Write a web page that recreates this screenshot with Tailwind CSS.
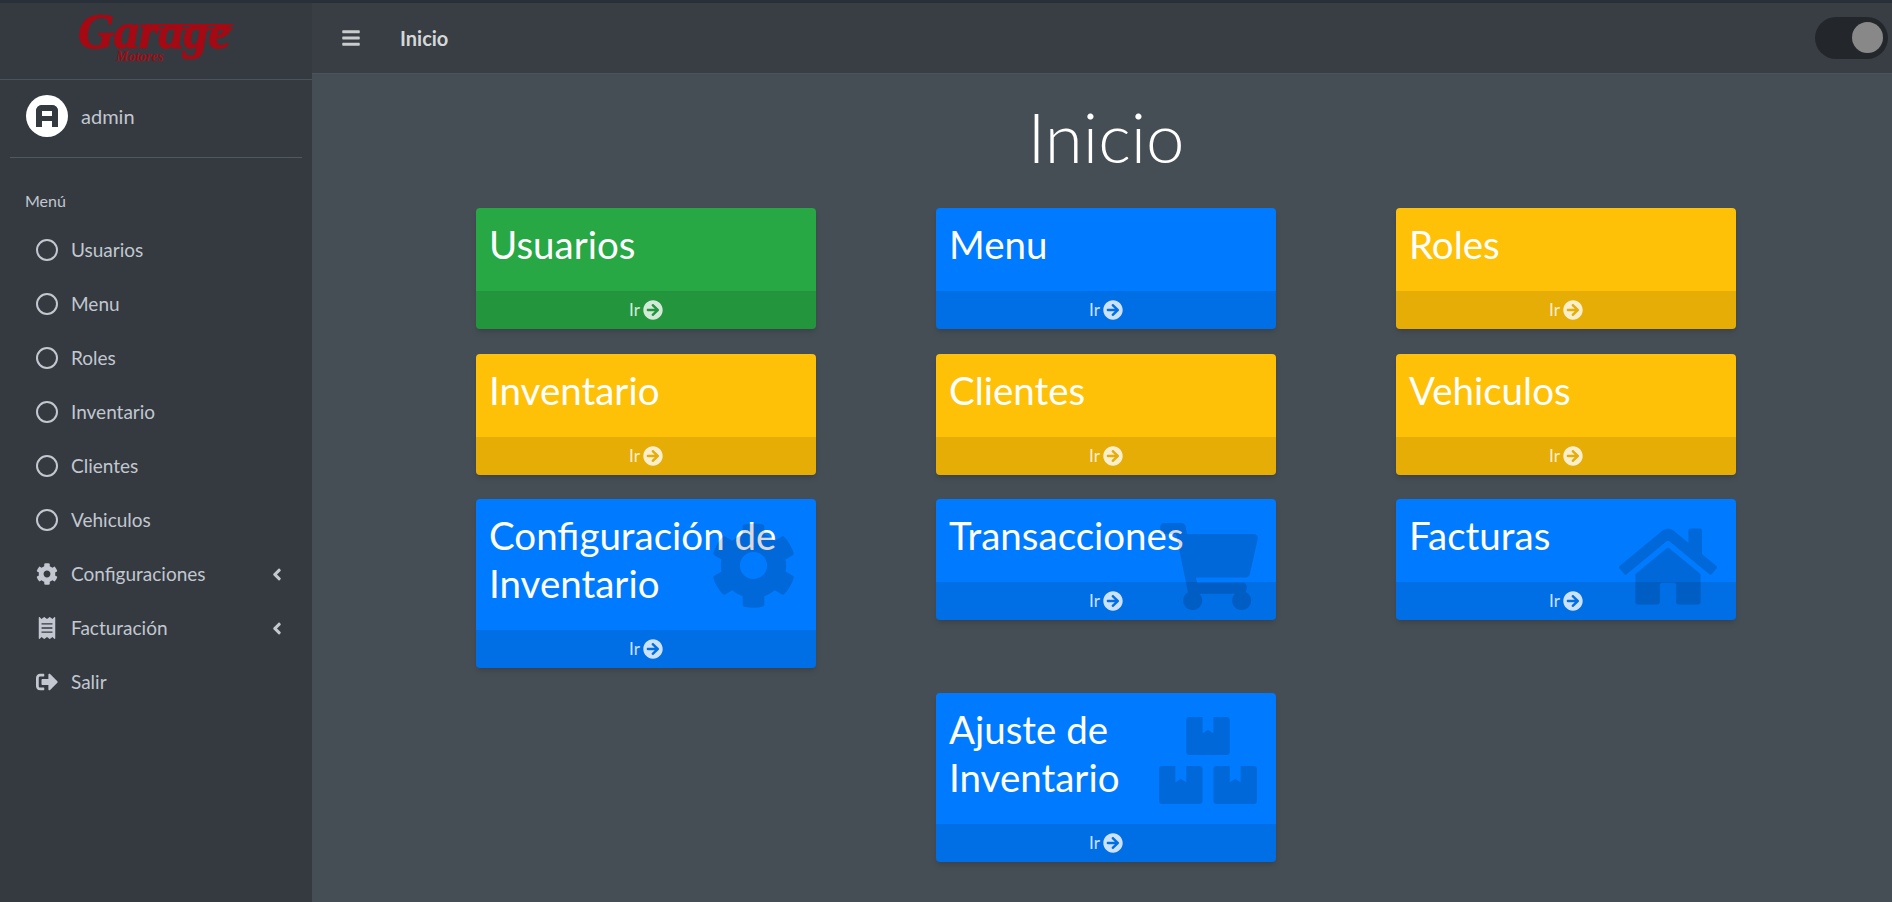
<!DOCTYPE html>
<html lang="es">
<head>
    <meta charset="UTF-8">
    <meta name="viewport" content="width=device-width, initial-scale=1.0">
    <title>Inicio</title>
    <script src="https://cdn.jsdelivr.net/npm/@tailwindcss/browser@4"></script>
</head>
<body class="h-screen overflow-hidden bg-[#343a40] font-[Lato,sans-serif] text-white">
    <div class="h-[3px] bg-[#2a303a]"></div>
    <div class="flex h-[899px]">
        <!-- Sidebar -->
        <aside class="w-[312px] shrink-0 bg-[#343a40] text-[#c2c7d0]">
            <div class="relative h-[77px] border-b border-[#4b545c]">
                <div class="absolute left-[78px] top-[10px] font-['Liberation_Serif',serif] text-[50px] font-bold italic leading-[36px] text-[#a50a14] [-webkit-text-stroke:1px_#a50a14]">Garage</div>
                <div class="absolute left-[146px] top-[21px] h-[2px] w-[87px] bg-[#a50a14]"></div>
                <div class="absolute left-[146px] top-[25px] h-[2px] w-[87px] bg-[#a50a14]"></div>
                <div class="absolute left-[116px] top-[47px] font-['Liberation_Serif',serif] text-[14px] font-bold italic leading-[14px] text-[#a50a14]">Motores</div>
            </div>
            <!-- Usuario -->
            <div class="mx-[10px] flex h-[78px] items-center border-b border-[#4f5962] pb-[6px] pl-[16px]">
                <div class="flex h-[42px] w-[42px] items-center justify-center rounded-full bg-white">
                    <div class="relative h-[22px] w-[22px] rounded-t-[6px] border-x-[6px] border-t-[6px] border-[#343a40]">
                        <div class="absolute left-0 right-0 top-[5px] h-[5px] bg-[#343a40]"></div>
                    </div>
                </div>
                <span class="ml-[13px] text-[20px] leading-none">admin</span>
            </div>
            <div class="pl-[25px] pt-[33px] text-[16px] leading-[20px]">Menú</div>
            <nav class="mt-[12px] text-[19px]">
                <a class="flex h-[54px] items-center pl-[36px]"><span class="h-[22px] w-[22px] rounded-full border-[2.5px] border-[#c2c7d0]"></span><span class="ml-[13px]">Usuarios</span></a>
                <a class="flex h-[54px] items-center pl-[36px]"><span class="h-[22px] w-[22px] rounded-full border-[2.5px] border-[#c2c7d0]"></span><span class="ml-[13px]">Menu</span></a>
                <a class="flex h-[54px] items-center pl-[36px]"><span class="h-[22px] w-[22px] rounded-full border-[2.5px] border-[#c2c7d0]"></span><span class="ml-[13px]">Roles</span></a>
                <a class="flex h-[54px] items-center pl-[36px]"><span class="h-[22px] w-[22px] rounded-full border-[2.5px] border-[#c2c7d0]"></span><span class="ml-[13px]">Inventario</span></a>
                <a class="flex h-[54px] items-center pl-[36px]"><span class="h-[22px] w-[22px] rounded-full border-[2.5px] border-[#c2c7d0]"></span><span class="ml-[13px]">Clientes</span></a>
                <a class="flex h-[54px] items-center pl-[36px]"><span class="h-[22px] w-[22px] rounded-full border-[2.5px] border-[#c2c7d0]"></span><span class="ml-[13px]">Vehiculos</span></a>
                <a class="flex h-[54px] items-center pl-[36px]">
                    <svg class="h-[22px] w-[22px] fill-current" viewBox="0 0 512 512"><path d="M487.4 315.7l-42.6-24.6c4.3-23.2 4.3-47 0-70.2l42.6-24.6c4.9-2.8 7.1-8.6 5.5-14-11.1-35.6-30-67.8-54.7-94.6-3.8-4.1-10-5.1-14.8-2.3L380.8 110c-17.9-15.4-38.5-27.3-60.8-35.1V25.8c0-5.6-3.9-10.5-9.4-11.7-36.7-8.2-74.3-7.8-109.2 0-5.5 1.2-9.4 6.1-9.4 11.7V75c-22.2 7.9-42.8 19.8-60.8 35.1L88.7 85.5c-4.9-2.8-11-1.9-14.8 2.3-24.7 26.7-43.6 58.9-54.7 94.6-1.7 5.4.6 11.2 5.5 14L67.3 221c-4.3 23.2-4.3 47 0 70.2l-42.6 24.6c-4.9 2.8-7.1 8.6-5.5 14 11.1 35.6 30 67.8 54.7 94.6 3.8 4.1 10 5.1 14.8 2.3l42.6-24.6c17.9 15.4 38.5 27.3 60.8 35.1v49.2c0 5.6 3.9 10.5 9.4 11.7 36.7 8.2 74.3 7.8 109.2 0 5.5-1.2 9.4-6.1 9.4-11.7v-49.2c22.2-7.9 42.8-19.8 60.8-35.1l42.6 24.6c4.9 2.8 11 1.9 14.8-2.3 24.7-26.7 43.6-58.9 54.7-94.6 1.5-5.5-.7-11.3-5.6-14.1zM256 336c-44.1 0-80-35.9-80-80s35.9-80 80-80 80 35.9 80 80-35.9 80-80 80z"/></svg>
                    <span class="ml-[13px]">Configuraciones</span>
                    <svg class="ml-auto mr-[30px] h-[19px] w-[10px] fill-current" viewBox="0 0 256 512"><path d="M31.7 239l136-136c9.4-9.4 24.6-9.4 33.9 0l22.6 22.6c9.4 9.4 9.4 24.6 0 33.9L127.9 256l96.4 96.4c9.4 9.4 9.4 24.6 0 33.9L201.7 409c-9.4 9.4-24.6 9.4-33.9 0l-136-136c-9.5-9.4-9.5-24.6-.1-34z"/></svg>
                </a>
                <a class="flex h-[54px] items-center pl-[36px]">
                    <svg class="h-[22px] w-[22px] fill-current" viewBox="0 0 384 512"><path d="M358.4 3.2L320 48 265.6 3.2a15.9 15.9 0 0 0-19.2 0L192 48 137.6 3.2a15.9 15.9 0 0 0-19.2 0L64 48 25.6 3.2C15-4.7 0 2.8 0 16v480c0 13.2 15 20.7 25.6 12.8L64 464l54.4 44.8a15.9 15.9 0 0 0 19.2 0L192 464l54.4 44.8a15.9 15.9 0 0 0 19.2 0L320 464l38.4 44.8c10.5 7.9 25.6.4 25.6-12.8V16c0-13.2-15-20.7-25.6-12.8zM320 360c0 4.4-3.6 8-8 8H72c-4.4 0-8-3.6-8-8v-16c0-4.4 3.6-8 8-8h240c4.4 0 8 3.6 8 8v16zm0-96c0 4.4-3.6 8-8 8H72c-4.4 0-8-3.6-8-8v-16c0-4.4 3.6-8 8-8h240c4.4 0 8 3.6 8 8v16zm0-96c0 4.4-3.6 8-8 8H72c-4.4 0-8-3.6-8-8v-16c0-4.4 3.6-8 8-8h240c4.4 0 8 3.6 8 8v16z"/></svg>
                    <span class="ml-[13px]">Facturación</span>
                    <svg class="ml-auto mr-[30px] h-[19px] w-[10px] fill-current" viewBox="0 0 256 512"><path d="M31.7 239l136-136c9.4-9.4 24.6-9.4 33.9 0l22.6 22.6c9.4 9.4 9.4 24.6 0 33.9L127.9 256l96.4 96.4c9.4 9.4 9.4 24.6 0 33.9L201.7 409c-9.4 9.4-24.6 9.4-33.9 0l-136-136c-9.5-9.4-9.5-24.6-.1-34z"/></svg>
                </a>
                <a class="flex h-[54px] items-center pl-[36px]">
                    <svg class="h-[22px] w-[22px] fill-current" viewBox="0 0 512 512"><path d="M497 273L329 441c-15 15-41 4.5-41-17v-96H152c-13.3 0-24-10.7-24-24v-96c0-13.3 10.7-24 24-24h136V88c0-21.4 25.9-32 41-17l168 168c9.3 9.4 9.3 24.6 0 34zM192 436v-40c0-6.6-5.4-12-12-12H96c-17.7 0-32-14.3-32-32V160c0-17.7 14.3-32 32-32h84c6.6 0 12-5.4 12-12V76c0-6.6-5.4-12-12-12H96c-53 0-96 43-96 96v192c0 53 43 96 96 96h84c6.6 0 12-5.4 12-12z"/></svg>
                    <span class="ml-[13px]">Salir</span>
                </a>
            </nav>
        </aside>

        <div class="flex min-w-0 flex-1 flex-col">
            <!-- Navbar -->
            <header class="flex h-[71px] shrink-0 items-center border-b border-[#4b545c] bg-[#383e44] pb-[1px] pl-[30px] pr-[4px]">
                <svg class="h-[20px] w-[18px] fill-[#c9cbcd]" viewBox="0 0 448 512"><path d="M16 132h416c8.837 0 16-7.163 16-16V76c0-8.837-7.163-16-16-16H16C7.163 60 0 67.163 0 76v40c0 8.837 7.163 16 16 16zm0 160h416c8.837 0 16-7.163 16-16v-40c0-8.837-7.163-16-16-16H16c-8.837 0-16 7.163-16 16v40c0 8.837 7.163 16 16 16zm0 160h416c8.837 0 16-7.163 16-16v-40c0-8.837-7.163-16-16-16H16c-8.837 0-16 7.163-16 16v40c0 8.837 7.163 16 16 16z"/></svg>
                <span class="ml-[40px] text-[20px] font-bold leading-none text-[#d5d7d9]">Inicio</span>
                <div class="ml-auto flex h-[42px] w-[73px] items-center justify-end rounded-full bg-[#23272b] pr-[5px]">
                    <div class="h-[31px] w-[31px] rounded-full bg-[#888888]"></div>
                </div>
            </header>

            <!-- Contenido -->
            <main class="flex-1 bg-[#454d55] pl-[164px]">
                <h1 class="h-[134px] w-[1260px] pt-[23px] text-center text-[69px] font-light leading-[80px] text-white">Inicio</h1>
                <div class="grid w-[1260px] grid-cols-[340px_340px_340px] items-start gap-x-[120px] gap-y-[24.5px]">
                    <!-- fila 1 -->
                    <div class="relative overflow-hidden rounded-[4px] bg-[#28a745] shadow-md">
                        <h3 class="px-[13px] pb-[23px] pt-[12px] text-[38.5px] leading-[48px]">Usuarios</h3>
                        <div class="flex h-[38px] items-center justify-center gap-[3px] bg-black/10 text-[17px] text-white/80">Ir <svg class="h-[20px] w-[20px] fill-white/80" viewBox="0 0 512 512"><path d="M256 8c137 0 248 111 248 248S393 504 256 504 8 393 8 256 119 8 256 8zm-28.9 143.6l75.5 72.4H120c-13.3 0-24 10.7-24 24v16c0 13.3 10.7 24 24 24h182.6l-75.5 72.4c-9.7 9.3-9.9 24.8-.4 34.3l11 10.9c9.4 9.4 24.6 9.4 33.9 0L404.3 273c9.4-9.4 9.4-24.6 0-33.9L271.6 106.3c-9.4-9.4-24.6-9.4-33.9 0l-11 10.9c-9.5 9.6-9.3 25.1.4 34.4z"/></svg></div>
                    </div>
                    <div class="relative overflow-hidden rounded-[4px] bg-[#007bff] shadow-md">
                        <h3 class="px-[13px] pb-[23px] pt-[12px] text-[38.5px] leading-[48px]">Menu</h3>
                        <div class="flex h-[38px] items-center justify-center gap-[3px] bg-black/10 text-[17px] text-white/80">Ir <svg class="h-[20px] w-[20px] fill-white/80" viewBox="0 0 512 512"><path d="M256 8c137 0 248 111 248 248S393 504 256 504 8 393 8 256 119 8 256 8zm-28.9 143.6l75.5 72.4H120c-13.3 0-24 10.7-24 24v16c0 13.3 10.7 24 24 24h182.6l-75.5 72.4c-9.7 9.3-9.9 24.8-.4 34.3l11 10.9c9.4 9.4 24.6 9.4 33.9 0L404.3 273c9.4-9.4 9.4-24.6 0-33.9L271.6 106.3c-9.4-9.4-24.6-9.4-33.9 0l-11 10.9c-9.5 9.6-9.3 25.1.4 34.4z"/></svg></div>
                    </div>
                    <div class="relative overflow-hidden rounded-[4px] bg-[#ffc107] shadow-md">
                        <h3 class="px-[13px] pb-[23px] pt-[12px] text-[38.5px] leading-[48px]">Roles</h3>
                        <div class="flex h-[38px] items-center justify-center gap-[3px] bg-black/10 text-[17px] text-white/80">Ir <svg class="h-[20px] w-[20px] fill-white/80" viewBox="0 0 512 512"><path d="M256 8c137 0 248 111 248 248S393 504 256 504 8 393 8 256 119 8 256 8zm-28.9 143.6l75.5 72.4H120c-13.3 0-24 10.7-24 24v16c0 13.3 10.7 24 24 24h182.6l-75.5 72.4c-9.7 9.3-9.9 24.8-.4 34.3l11 10.9c9.4 9.4 24.6 9.4 33.9 0L404.3 273c9.4-9.4 9.4-24.6 0-33.9L271.6 106.3c-9.4-9.4-24.6-9.4-33.9 0l-11 10.9c-9.5 9.6-9.3 25.1.4 34.4z"/></svg></div>
                    </div>
                    <!-- fila 2 -->
                    <div class="relative overflow-hidden rounded-[4px] bg-[#ffc107] shadow-md">
                        <h3 class="px-[13px] pb-[23px] pt-[12px] text-[38.5px] leading-[48px]">Inventario</h3>
                        <div class="flex h-[38px] items-center justify-center gap-[3px] bg-black/10 text-[17px] text-white/80">Ir <svg class="h-[20px] w-[20px] fill-white/80" viewBox="0 0 512 512"><path d="M256 8c137 0 248 111 248 248S393 504 256 504 8 393 8 256 119 8 256 8zm-28.9 143.6l75.5 72.4H120c-13.3 0-24 10.7-24 24v16c0 13.3 10.7 24 24 24h182.6l-75.5 72.4c-9.7 9.3-9.9 24.8-.4 34.3l11 10.9c9.4 9.4 24.6 9.4 33.9 0L404.3 273c9.4-9.4 9.4-24.6 0-33.9L271.6 106.3c-9.4-9.4-24.6-9.4-33.9 0l-11 10.9c-9.5 9.6-9.3 25.1.4 34.4z"/></svg></div>
                    </div>
                    <div class="relative overflow-hidden rounded-[4px] bg-[#ffc107] shadow-md">
                        <h3 class="px-[13px] pb-[23px] pt-[12px] text-[38.5px] leading-[48px]">Clientes</h3>
                        <div class="flex h-[38px] items-center justify-center gap-[3px] bg-black/10 text-[17px] text-white/80">Ir <svg class="h-[20px] w-[20px] fill-white/80" viewBox="0 0 512 512"><path d="M256 8c137 0 248 111 248 248S393 504 256 504 8 393 8 256 119 8 256 8zm-28.9 143.6l75.5 72.4H120c-13.3 0-24 10.7-24 24v16c0 13.3 10.7 24 24 24h182.6l-75.5 72.4c-9.7 9.3-9.9 24.8-.4 34.3l11 10.9c9.4 9.4 24.6 9.4 33.9 0L404.3 273c9.4-9.4 9.4-24.6 0-33.9L271.6 106.3c-9.4-9.4-24.6-9.4-33.9 0l-11 10.9c-9.5 9.6-9.3 25.1.4 34.4z"/></svg></div>
                    </div>
                    <div class="relative overflow-hidden rounded-[4px] bg-[#ffc107] shadow-md">
                        <h3 class="px-[13px] pb-[23px] pt-[12px] text-[38.5px] leading-[48px]">Vehiculos</h3>
                        <div class="flex h-[38px] items-center justify-center gap-[3px] bg-black/10 text-[17px] text-white/80">Ir <svg class="h-[20px] w-[20px] fill-white/80" viewBox="0 0 512 512"><path d="M256 8c137 0 248 111 248 248S393 504 256 504 8 393 8 256 119 8 256 8zm-28.9 143.6l75.5 72.4H120c-13.3 0-24 10.7-24 24v16c0 13.3 10.7 24 24 24h182.6l-75.5 72.4c-9.7 9.3-9.9 24.8-.4 34.3l11 10.9c9.4 9.4 24.6 9.4 33.9 0L404.3 273c9.4-9.4 9.4-24.6 0-33.9L271.6 106.3c-9.4-9.4-24.6-9.4-33.9 0l-11 10.9c-9.5 9.6-9.3 25.1.4 34.4z"/></svg></div>
                    </div>
                    <!-- fila 3 -->
                    <div class="relative overflow-hidden rounded-[4px] bg-[#007bff] shadow-md">
                        <h3 class="px-[13px] pb-[23px] pt-[12px] text-[38.5px] leading-[48px]">Configuración de<br>Inventario</h3>
                        <div class="flex h-[38px] items-center justify-center gap-[3px] bg-black/10 text-[17px] text-white/80">Ir <svg class="h-[20px] w-[20px] fill-white/80" viewBox="0 0 512 512"><path d="M256 8c137 0 248 111 248 248S393 504 256 504 8 393 8 256 119 8 256 8zm-28.9 143.6l75.5 72.4H120c-13.3 0-24 10.7-24 24v16c0 13.3 10.7 24 24 24h182.6l-75.5 72.4c-9.7 9.3-9.9 24.8-.4 34.3l11 10.9c9.4 9.4 24.6 9.4 33.9 0L404.3 273c9.4-9.4 9.4-24.6 0-33.9L271.6 106.3c-9.4-9.4-24.6-9.4-33.9 0l-11 10.9c-9.5 9.6-9.3 25.1.4 34.4z"/></svg></div>
                        <svg class="absolute right-[19px] top-[23px] h-[87px] w-[87px] fill-black/15" viewBox="0 0 512 512"><path d="M487.4 315.7l-42.6-24.6c4.3-23.2 4.3-47 0-70.2l42.6-24.6c4.9-2.8 7.1-8.6 5.5-14-11.1-35.6-30-67.8-54.7-94.6-3.8-4.1-10-5.1-14.8-2.3L380.8 110c-17.9-15.4-38.5-27.3-60.8-35.1V25.8c0-5.6-3.9-10.5-9.4-11.7-36.7-8.2-74.3-7.8-109.2 0-5.5 1.2-9.4 6.1-9.4 11.7V75c-22.2 7.9-42.8 19.8-60.8 35.1L88.7 85.5c-4.9-2.8-11-1.9-14.8 2.3-24.7 26.7-43.6 58.9-54.7 94.6-1.7 5.4.6 11.2 5.5 14L67.3 221c-4.3 23.2-4.3 47 0 70.2l-42.6 24.6c-4.9 2.8-7.1 8.6-5.5 14 11.1 35.6 30 67.8 54.7 94.6 3.8 4.1 10 5.1 14.8 2.3l42.6-24.6c17.9 15.4 38.5 27.3 60.8 35.1v49.2c0 5.6 3.9 10.5 9.4 11.7 36.7 8.2 74.3 7.8 109.2 0 5.5-1.2 9.4-6.1 9.4-11.7v-49.2c22.2-7.9 42.8-19.8 60.8-35.1l42.6 24.6c4.9 2.8 11 1.9 14.8-2.3 24.7-26.7 43.6-58.9 54.7-94.6 1.5-5.5-.7-11.3-5.6-14.1zM256 336c-44.1 0-80-35.9-80-80s35.9-80 80-80 80 35.9 80 80-35.9 80-80 80z"/></svg>
                    </div>
                    <div class="relative overflow-hidden rounded-[4px] bg-[#007bff] shadow-md">
                        <h3 class="px-[13px] pb-[23px] pt-[12px] text-[38.5px] leading-[48px]">Transacciones</h3>
                        <div class="flex h-[38px] items-center justify-center gap-[3px] bg-black/10 text-[17px] text-white/80">Ir <svg class="h-[20px] w-[20px] fill-white/80" viewBox="0 0 512 512"><path d="M256 8c137 0 248 111 248 248S393 504 256 504 8 393 8 256 119 8 256 8zm-28.9 143.6l75.5 72.4H120c-13.3 0-24 10.7-24 24v16c0 13.3 10.7 24 24 24h182.6l-75.5 72.4c-9.7 9.3-9.9 24.8-.4 34.3l11 10.9c9.4 9.4 24.6 9.4 33.9 0L404.3 273c9.4-9.4 9.4-24.6 0-33.9L271.6 106.3c-9.4-9.4-24.6-9.4-33.9 0l-11 10.9c-9.5 9.6-9.3 25.1.4 34.4z"/></svg></div>
                        <svg class="absolute right-[18px] top-[24px] h-[87px] w-[98px] fill-black/15" viewBox="0 0 576 512"><path d="M528.12 301.319l47.273-208C578.806 78.301 567.391 64 551.99 64H159.208l-9.166-44.81C147.758 8.021 137.93 0 126.529 0H24C10.745 0 0 10.745 0 24v16c0 13.255 10.745 24 24 24h69.883l70.248 343.435C147.325 417.1 136 435.222 136 456c0 30.928 25.072 56 56 56s56-25.072 56-56c0-15.674-6.447-29.835-16.824-40h209.647C430.447 426.165 424 440.326 424 456c0 30.928 25.072 56 56 56s56-25.072 56-56c0-22.172-12.888-41.332-31.579-50.405l5.517-24.276c3.413-15.018-8.002-29.319-23.403-29.319H218.117l-6.545-32h293.145c11.206 0 20.92-7.754 23.403-18.681z"/></svg>
                    </div>
                    <div class="relative overflow-hidden rounded-[4px] bg-[#007bff] shadow-md">
                        <h3 class="px-[13px] pb-[23px] pt-[12px] text-[38.5px] leading-[48px]">Facturas</h3>
                        <div class="flex h-[38px] items-center justify-center gap-[3px] bg-black/10 text-[17px] text-white/80">Ir <svg class="h-[20px] w-[20px] fill-white/80" viewBox="0 0 512 512"><path d="M256 8c137 0 248 111 248 248S393 504 256 504 8 393 8 256 119 8 256 8zm-28.9 143.6l75.5 72.4H120c-13.3 0-24 10.7-24 24v16c0 13.3 10.7 24 24 24h182.6l-75.5 72.4c-9.7 9.3-9.9 24.8-.4 34.3l11 10.9c9.4 9.4 24.6 9.4 33.9 0L404.3 273c9.4-9.4 9.4-24.6 0-33.9L271.6 106.3c-9.4-9.4-24.6-9.4-33.9 0l-11 10.9c-9.5 9.6-9.3 25.1.4 34.4z"/></svg></div>
                        <svg class="absolute right-[19px] top-[24px] h-[87px] w-[98px] fill-black/15" viewBox="0 0 576 512"><path d="M280.37 148.26L96 300.11V464a16 16 0 0 0 16 16l112.06-.29a16 16 0 0 0 15.92-16V368a16 16 0 0 1 16-16h64a16 16 0 0 1 16 16v95.64a16 16 0 0 0 16 16.05L464 480a16 16 0 0 0 16-16V300L295.67 148.26a12.19 12.19 0 0 0-15.3 0zM571.6 251.47L488 182.56V44.05a12 12 0 0 0-12-12h-56a12 12 0 0 0-12 12v72.61L318.47 43a48 48 0 0 0-61 0L4.34 251.47a12 12 0 0 0-1.6 16.9l25.5 31A12 12 0 0 0 45.15 301l235.22-193.74a12.19 12.19 0 0 1 15.3 0L530.9 301a12 12 0 0 0 16.9-1.6l25.5-31a12 12 0 0 0-1.7-16.93z"/></svg>
                    </div>
                    <!-- fila 4 -->
                    <div class="relative col-start-2 overflow-hidden rounded-[4px] bg-[#007bff] shadow-md">
                        <h3 class="px-[13px] pb-[23px] pt-[12px] text-[38.5px] leading-[48px]">Ajuste de<br>Inventario</h3>
                        <div class="flex h-[38px] items-center justify-center gap-[3px] bg-black/10 text-[17px] text-white/80">Ir <svg class="h-[20px] w-[20px] fill-white/80" viewBox="0 0 512 512"><path d="M256 8c137 0 248 111 248 248S393 504 256 504 8 393 8 256 119 8 256 8zm-28.9 143.6l75.5 72.4H120c-13.3 0-24 10.7-24 24v16c0 13.3 10.7 24 24 24h182.6l-75.5 72.4c-9.7 9.3-9.9 24.8-.4 34.3l11 10.9c9.4 9.4 24.6 9.4 33.9 0L404.3 273c9.4-9.4 9.4-24.6 0-33.9L271.6 106.3c-9.4-9.4-24.6-9.4-33.9 0l-11 10.9c-9.5 9.6-9.3 25.1.4 34.4z"/></svg></div>
                        <svg class="absolute right-[19px] top-[24px] h-[87px] w-[98px] fill-black/15" viewBox="0 0 576 512"><path d="M560 288h-80v96l-32-21.3-32 21.3v-96h-80c-8.8 0-16 7.2-16 16v192c0 8.8 7.2 16 16 16h224c8.8 0 16-7.2 16-16V304c0-8.8-7.2-16-16-16zm-384-64h224c8.8 0 16-7.2 16-16V16c0-8.8-7.2-16-16-16h-80v96l-32-21.3L256 96V0h-80c-8.8 0-16 7.2-16 16v192c0 8.8 7.2 16 16 16zm64 64h-80v96l-32-21.3L96 384v-96H16c-8.8 0-16 7.2-16 16v192c0 8.8 7.2 16 16 16h224c8.8 0 16-7.2 16-16V304c0-8.8-7.2-16-16-16z"/></svg>
                    </div>
                </div>
            </main>
        </div>
    </div>
</body>
</html>
